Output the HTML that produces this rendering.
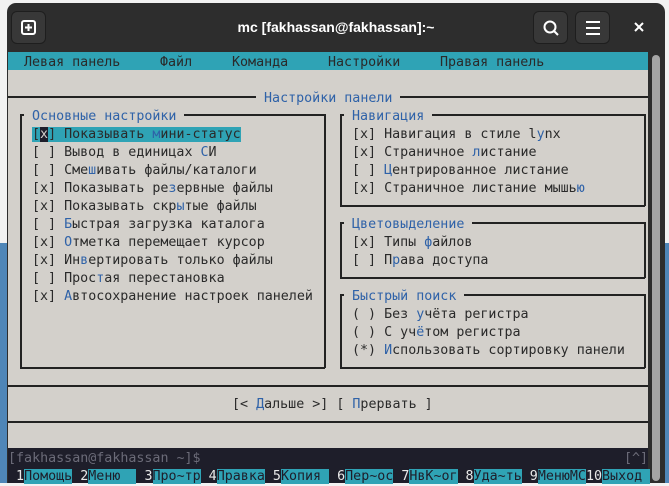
<!DOCTYPE html>
<html><head><meta charset="utf-8"><style>
*{margin:0;padding:0;box-sizing:border-box}
body{width:669px;height:483px;overflow:hidden;background:#f2f2f2;position:relative;font-family:"DejaVu Sans Mono","Liberation Mono",monospace}
.desk-b{position:absolute;left:0;top:243px;width:669px;height:240px;background:#4f86b8}
.win{position:absolute;left:7px;top:3px;width:658px;height:480px;background:#2d2d2d;border-radius:9px 9px 0 0}
.title{position:absolute;left:0;top:16px;width:658px;text-align:center;color:#fff;font:bold 14px "Liberation Sans",sans-serif}
.btn{position:absolute;top:8px;width:35px;height:33px;background:#383838;border:1px solid #1e1e1e;border-radius:6px}
.term{position:absolute;left:8px;top:52px;width:640px;height:431px;background:#d3d0cb}
.r{position:absolute;height:18px;line-height:18px;font-size:13.33px;white-space:pre;color:#2a2a2a;margin-top:2px}
.b{color:#2f62a8}
.hl{background:#2fa3b5}
.cur{background:#1e1e2a;color:#d3d0cb}
.h{position:absolute;height:1.5px;background:#222}
.v{position:absolute;width:1.5px;background:#222}
.bg{background:#d3d0cb}
</style></head><body>
<div class="desk-b"></div>
<div class="win">
 <div class="title">mc [fakhassan@fakhassan]:~</div>
 <div class="btn" style="left:4px"><svg width="35" height="33"><rect x="10" y="9" width="13" height="13" rx="2" fill="none" stroke="#fff" stroke-width="2"/><path d="M16.5 12v7M13 15.5h7" stroke="#fff" stroke-width="2"/></svg></div>
 <div class="btn" style="left:526px"><svg width="35" height="33"><circle cx="16" cy="15" r="5.5" fill="none" stroke="#fff" stroke-width="2"/><path d="M20 19l4 4" stroke="#fff" stroke-width="2"/></svg></div>
 <div class="btn" style="left:568px"><svg width="35" height="33"><path d="M10 10h14M10 16h14M10 22h14" stroke="#fff" stroke-width="2"/></svg></div>
 <svg style="position:absolute;left:626px;top:18px" width="12" height="12"><path d="M2 2l8 8M10 2l-8 8" stroke="#fff" stroke-width="2"/></svg>
</div>
<div style="position:absolute;left:648px;top:52px;width:17px;height:431px;background:#2d2d2d"></div>
<div style="position:absolute;left:652px;top:55px;width:8px;height:426px;background:#a5a5a5;border-radius:4px"></div>
<div class="term"></div>
<div style="position:absolute;left:8px;top:52px;width:640px;height:18px;background:#2fa3b5"></div>
<div style="position:absolute;left:8px;top:448px;width:640px;height:35px;background:#1e1e2a"></div>

<div class="h" style="left:8px;width:640px;top:96px"></div>
<div class="h" style="left:8px;width:640px;top:385px"></div>
<div class="h" style="left:8px;width:640px;top:421px"></div>
<div class="h" style="left:20px;width:305px;top:114px"></div>
<div class="h" style="left:20px;width:305px;top:367px"></div>
<div class="v" style="left:20px;top:114px;height:254px"></div>
<div class="v" style="left:324px;top:114px;height:254px"></div>
<div class="h" style="left:340px;width:305px;top:114px"></div>
<div class="h" style="left:340px;width:305px;top:205px"></div>
<div class="v" style="left:340px;top:114px;height:92px"></div>
<div class="v" style="left:644px;top:114px;height:92px"></div>
<div class="h" style="left:340px;width:305px;top:222px"></div>
<div class="h" style="left:340px;width:305px;top:277px"></div>
<div class="v" style="left:340px;top:222px;height:56px"></div>
<div class="v" style="left:644px;top:222px;height:56px"></div>
<div class="h" style="left:340px;width:305px;top:294px"></div>
<div class="h" style="left:340px;width:305px;top:367px"></div>
<div class="v" style="left:340px;top:294px;height:74px"></div>
<div class="v" style="left:644px;top:294px;height:74px"></div>

<div class="r" style="top:52px;left:24px">Левая панель</div>
<div class="r" style="top:52px;left:160px">Файл</div>
<div class="r" style="top:52px;left:232px">Команда</div>
<div class="r" style="top:52px;left:328px">Настройки</div>
<div class="r" style="top:52px;left:440px">Правая панель</div>

<div class="r bg b" style="top:88px;left:256px"> Настройки панели </div>
<div class="r bg b" style="top:106px;left:24px"> Основные настройки </div>
<div class="r bg b" style="top:106px;left:344px"> Навигация </div>
<div class="r bg b" style="top:214px;left:344px"> Цветовыделение </div>
<div class="r bg b" style="top:286px;left:344px"> Быстрый поиск </div>

<div class="r" style="top:124px;left:32px"><span class="hl">[<span class="cur">x</span>] Показывать <span class="b">м</span>ини-статус</span></div>
<div class="r" style="top:142px;left:32px">[ ] Вывод в единицах <span class="b">С</span>И</div>
<div class="r" style="top:160px;left:32px">[ ] Сме<span class="b">ш</span>ивать файлы/каталоги</div>
<div class="r" style="top:178px;left:32px">[x] Показывать ре<span class="b">з</span>ервные файлы</div>
<div class="r" style="top:196px;left:32px">[x] Показывать скр<span class="b">ы</span>тые файлы</div>
<div class="r" style="top:214px;left:32px">[ ] <span class="b">Б</span>ыстрая загрузка каталога</div>
<div class="r" style="top:232px;left:32px">[x] <span class="b">О</span>тметка перемещает курсор</div>
<div class="r" style="top:250px;left:32px">[x] Ин<span class="b">в</span>ертировать только файлы</div>
<div class="r" style="top:268px;left:32px">[ ] Прос<span class="b">т</span>ая перестановка</div>
<div class="r" style="top:286px;left:32px">[x] <span class="b">А</span>втосохранение настроек панелей</div>

<div class="r" style="top:124px;left:352px">[x] Навигация в стиле l<span class="b">y</span>nx</div>
<div class="r" style="top:142px;left:352px">[x] Страничное <span class="b">л</span>истание</div>
<div class="r" style="top:160px;left:352px">[ ] <span class="b">Ц</span>ентрированное листание</div>
<div class="r" style="top:178px;left:352px">[x] Страничное листание мышь<span class="b">ю</span></div>
<div class="r" style="top:232px;left:352px">[x] Типы <span class="b">ф</span>айлов</div>
<div class="r" style="top:250px;left:352px">[ ] П<span class="b">р</span>ава доступа</div>
<div class="r" style="top:304px;left:352px">( ) Без <span class="b">у</span>чёта регистра</div>
<div class="r" style="top:322px;left:352px">( ) С уч<span class="b">ё</span>том регистра</div>
<div class="r" style="top:340px;left:352px">(*) <span class="b">И</span>спользовать сортировку панели</div>

<div class="r" style="top:394px;left:232px">[&lt; <span class="b">Д</span>альше &gt;] [ <span class="b">П</span>рервать ]</div>
<div class="r" style="top:448px;left:8px;color:#6b6b78">[fakhassan@fakhassan ~]$</div>
<div class="r" style="top:448px;left:624px;color:#6b6b78">[^]</div>
<div class="r" style="top:466px;left:8px;color:#e8e8e8"> 1<span class="hl" style="color:#1e1e2a">Помощь</span> 2<span class="hl" style="color:#1e1e2a">Меню  </span> 3<span class="hl" style="color:#1e1e2a">Про~тр</span> 4<span class="hl" style="color:#1e1e2a">Правка</span> 5<span class="hl" style="color:#1e1e2a">Копия </span> 6<span class="hl" style="color:#1e1e2a">Пер~ос</span> 7<span class="hl" style="color:#1e1e2a">НвК~ог</span> 8<span class="hl" style="color:#1e1e2a">Уда~ть</span> 9<span class="hl" style="color:#1e1e2a">МенюMC</span>10<span class="hl" style="color:#1e1e2a">Выход </span></div>
</body></html>
